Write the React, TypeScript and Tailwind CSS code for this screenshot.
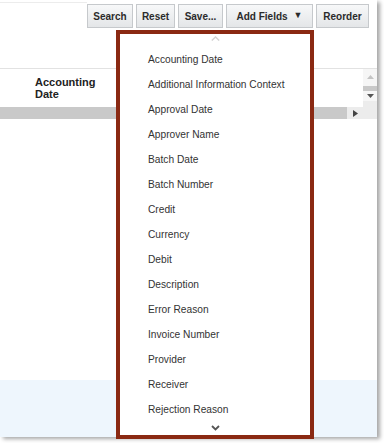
import React from "react";

const items = [
  "Accounting Date",
  "Additional Information Context",
  "Approval Date",
  "Approver Name",
  "Batch Date",
  "Batch Number",
  "Credit",
  "Currency",
  "Debit",
  "Description",
  "Error Reason",
  "Invoice Number",
  "Provider",
  "Receiver",
  "Rejection Reason",
];

function Btn({ children, w }: { children: React.ReactNode; w: string }) {
  return (
    <div
      className={`${w} h-[24px] flex items-center justify-center border border-[#c6c9cc] bg-gradient-to-b from-[#f7f8f9] to-[#e4e6e8] text-[10px] font-bold text-[#2b2b2b] whitespace-nowrap`}
    >
      {children}
    </div>
  );
}

export default function App() {
  return (
    <div
      className="relative w-[384px] h-[443px] bg-white overflow-hidden"
      style={{ fontFamily: '"Liberation Sans", Arial, sans-serif' }}
    >
      <div className="w-[377px] h-[437px] bg-white shadow-[3px_2px_4px_rgba(0,0,0,0.35)] flex flex-col">
        <div className="h-[3px] border-b border-[#ececec] w-[87px]" />
        <div className="flex justify-end gap-[3px] pr-[8px] pt-[1px]">
          <Btn w="w-[46px]">Search</Btn>
          <Btn w="w-[39px]">Reset</Btn>
          <Btn w="w-[45px]">Save...</Btn>
          <Btn w="w-[87px]">
            <span>Add Fields</span>
            <span className="ml-[6px] text-[9px]">▼</span>
          </Btn>
          <Btn w="w-[53px]">Reorder</Btn>
        </div>
        <div className="h-[40px]" />
        <div className="flex border-t border-[#e2e2e2]">
          <div className="flex-1 flex flex-col">
            <div className="h-[38px] pl-[35px] pt-[7px] text-[11px] leading-[12px] font-bold text-[#222]">
              Accounting
              <br />
              Date
            </div>
            <div className="h-[12px] flex">
              <div className="w-[347px] bg-[#c9c9c9]" />
              <div className="flex-1 bg-[#ececec] flex items-center justify-center">
                <svg width="5" height="7" viewBox="0 0 5 7">
                  <path d="M0 0 L5 3.5 L0 7 Z" fill="#444" />
                </svg>
              </div>
            </div>
          </div>
          <div className="w-[14px] flex flex-col bg-[#f6f6f6]">
            <div className="h-[12px] mt-[2px] flex items-center justify-center">
              <svg width="7" height="4" viewBox="0 0 7 4">
                <path d="M0 4 L3.5 0 L7 4 Z" fill="#c4c4c4" />
              </svg>
            </div>
            <div className="mt-[3px] h-[5px] bg-[#c9c9c9]" />
            <div className="h-[10px] flex items-center justify-center">
              <svg width="7" height="4" viewBox="0 0 7 4">
                <path d="M0 0 L3.5 4 L7 0 Z" fill="#555" />
              </svg>
            </div>
            <div className="flex-1 bg-[#ececec]" />
          </div>
        </div>
        <div className="flex-1" />
        <div className="h-[57px] bg-[#eef6fd]" />
      </div>

      <div className="absolute left-[116px] top-[30px] w-[198px] h-[409px] border-[4px] border-[#8a2912] bg-white flex flex-col">
        <div className="h-[12px] flex justify-center pt-[2px]">
          <svg width="9" height="5" viewBox="0 0 9 5">
            <path d="M0.8 4.5 L4.5 1 L8.2 4.5" stroke="#d4d4d4" strokeWidth="1.5" fill="none" />
          </svg>
        </div>
        <div className="h-[1px]" />
        <div className="flex flex-col">
          {items.map((t) => (
            <div
              key={t}
              className="h-[25px] leading-[26px] pl-[28px] text-[10.2px] text-[#333] whitespace-nowrap"
            >
              {t}
            </div>
          ))}
        </div>
        <div className="flex justify-center pt-[3px]">
          <svg width="9" height="6" viewBox="0 0 9 6">
            <path d="M1 1 L4.5 4.5 L8 1" stroke="#555" strokeWidth="1.8" fill="none" />
          </svg>
        </div>
      </div>
    </div>
  );
}
